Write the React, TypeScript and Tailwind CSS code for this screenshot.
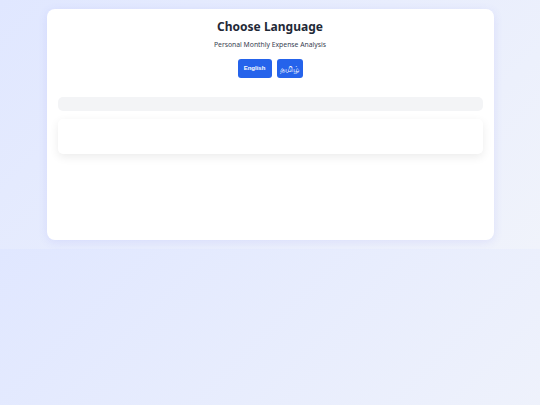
import React from 'react';

export default function App() {
  return (
    <div className="min-h-screen bg-[linear-gradient(135deg,#e0e7ff_0%,#f0f3fb_100%)] bg-[length:100%_249px] bg-repeat font-['Noto_Sans',sans-serif]">
      <div className="p-[9px]">
        <div className="mx-auto w-[447px] h-[231px] bg-white rounded-[8px] shadow-[0_2px_10px_rgba(99,102,241,0.12)] px-[11px] pt-[9px]">
          <h1 className="text-center text-[12px] leading-[18px] font-bold text-[#1f2937]">
            Choose Language
          </h1>
          <p className="mt-[4px] text-center text-[6.8px] leading-[10px] text-[#374151]">
            Personal Monthly Expense Analysis
          </p>
          <div className="mt-[9px] flex justify-center gap-[5px]">
            <button className="h-[19px] w-[34px] rounded-[3px] bg-[#2563eb] text-white text-[6px] font-bold font-['Liberation_Sans',sans-serif]">
              English
            </button>
            <button className="h-[19px] w-[26px] rounded-[3px] bg-[#2563eb] text-white text-[8px]">
              தமிழ்
            </button>
          </div>
          <div className="mt-[19px] h-[14px] rounded-[5px] bg-[#f3f4f6]" />
          <div className="mt-[8px] h-[35px] rounded-[5px] bg-white shadow-[0_3px_10px_rgba(0,0,0,0.08)]" />
        </div>
      </div>
    </div>
  );
}
